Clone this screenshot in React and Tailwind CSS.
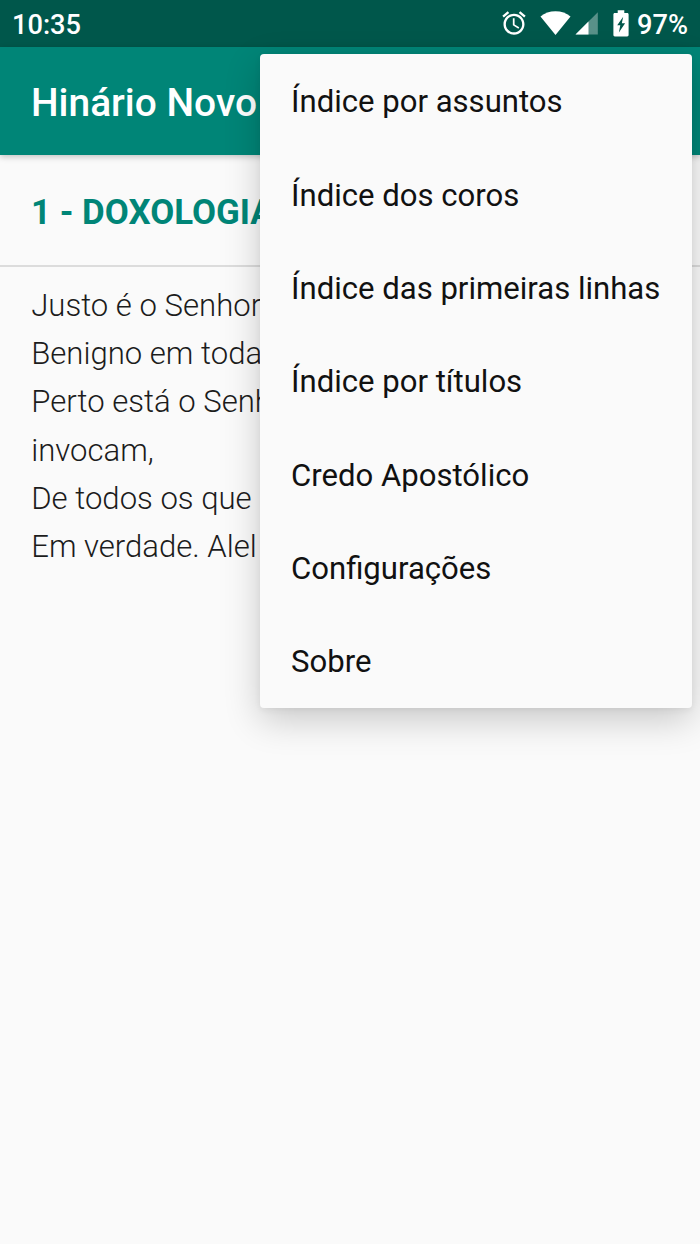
const MENU_ITEMS = [
  "Índice por assuntos",
  "Índice dos coros",
  "Índice das primeiras linhas",
  "Índice por títulos",
  "Credo Apostólico",
  "Configurações",
  "Sobre",
];

const VERSES = [
  "Justo é o Senhor",
  "Benigno em toda",
  "Perto está o Senh",
  "invocam,",
  "De todos os que",
  "Em verdade. Alel",
];

function AlarmIcon() {
  return (
    <svg className="h-[28px] w-[28px]" viewBox="0 0 24 24" fill="#fff">
      <path d="M22 5.72l-4.6-3.86-1.29 1.53 4.6 3.86L22 5.72zM7.88 3.39L6.6 1.86 2 5.71l1.29 1.53 4.59-3.85zM12.5 8H11v6l4.75 2.85.75-1.23-4-2.37V8zM12 4c-4.97 0-9 4.03-9 9s4.02 9 9 9c4.97 0 9-4.03 9-9s-4.03-9-9-9zm0 16c-3.87 0-7-3.13-7-7s3.13-7 7-7 7 3.13 7 7-3.13 7-7 7z" />
    </svg>
  );
}

function WifiIcon() {
  return (
    <svg className="ml-[12px] h-[24px] w-[31px]" viewBox="0 0 31 24" fill="#fff">
      <path d="M.5 5.4C4.6 2.2 9.8.3 15.5.3s10.9 1.9 15 5.1L15.5 23.9z" />
    </svg>
  );
}

function SignalIcon() {
  return (
    <svg className="ml-[4px] h-[24px] w-[24px]" viewBox="0 0 24 24" fill="#fff">
      <path opacity=".35" d="M22.8 1.2v22.3H.5z" />
      <path d="M13.5 10.5v13H.5z" />
    </svg>
  );
}

function BatteryIcon() {
  return (
    <svg className="ml-[14px] h-[27px] w-[16px]" viewBox="0 0 16 27">
      <path
        fill="#fff"
        d="M4.7 .3h6.6v2.7h2.9c.8 0 1.4.6 1.4 1.4v20.7c0 .8-.6 1.4-1.4 1.4h-12.4c-.8 0-1.4-.6-1.4-1.4v-20.7c0-.8.6-1.4 1.4-1.4h2.9z"
      />
      <path fill="#00574b" d="M10.2 6.8L4.2 15.2h3.1L5.9 22.6 12.1 13.3H8.8z" />
    </svg>
  );
}

function StatusBar() {
  return (
    <div className="flex h-[47px] items-center justify-between bg-[#00574b] pl-[12px] pr-[12px] text-[27.2px] font-medium text-white">
      <span className="pt-[3px]">10:35</span>
      <div className="flex items-center">
        <AlarmIcon />
        <WifiIcon />
        <SignalIcon />
        <BatteryIcon />
        <span className="ml-[8px] pt-[3px]">97%</span>
      </div>
    </div>
  );
}

export default function App() {
  return (
    <div className="relative h-[1244px] w-[700px] overflow-hidden bg-[#fafafa] font-[Roboto,sans-serif]">
      <StatusBar />
      <header className="relative flex h-[108px] items-center bg-[#008577] pl-[31px] pt-[5px] shadow-[0_2px_6px_rgba(0,0,0,0.22)]">
        <h1 className="whitespace-nowrap text-[38.9px] font-medium text-white">Hinário Novo</h1>
      </header>
      <div className="flex h-[112px] items-center border-b-2 border-[#dcdcdc] pl-[31px] pt-[6px]">
        <h2 className="whitespace-nowrap text-[34.9px] font-bold text-[#008577]">1 - DOXOLOGIA</h2>
      </div>
      <main className="whitespace-nowrap pl-[31.2px] pt-[15px] text-[31.1px] font-light leading-[48.2px] text-[#1c1c1c]">
        {VERSES.map((line) => (
          <p key={line}>{line}</p>
        ))}
      </main>
      <ul className="absolute right-[8px] top-[54.4px] w-[432px] rounded-[4px] bg-[#fafafa] text-[31.1px] text-[#111] shadow-[0_12px_36px_rgba(0,0,0,0.2),0_2px_6px_rgba(0,0,0,0.06)]">
        {MENU_ITEMS.map((item) => (
          <li key={item} className="flex h-[93.33px] items-center whitespace-nowrap pl-[31px] pt-[3.4px]">
            {item}
          </li>
        ))}
      </ul>
    </div>
  );
}
